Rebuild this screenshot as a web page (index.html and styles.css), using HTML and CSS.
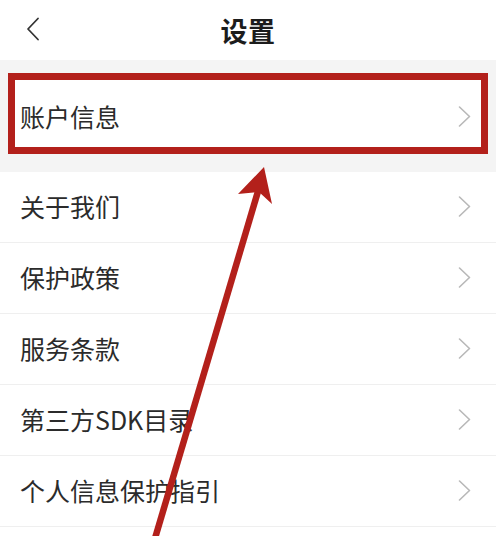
FILE: index.html
```html
<!DOCTYPE html>
<html lang="zh-CN">
<head>
<meta charset="utf-8">
<title>设置</title>
<link rel="stylesheet" href="styles.css">
</head>
<body>
<div class="page">
  <header class="topbar">
    <svg class="back" width="14" height="24" viewBox="0 0 14 24"><path d="M12 1.5 L2 12 L12 22.5" fill="none" stroke="#333" stroke-width="1.8" stroke-linecap="round" stroke-linejoin="round"/></svg>
    <h1 class="title">设置</h1>
  </header>
  <section class="band">
    <div class="row row-marked">
      <span class="label">账户信息</span>
      <svg class="chev" width="13" height="21" viewBox="0 0 13 21"><path d="M1.5 1 L11.5 10.5 L1.5 20" fill="none" stroke="#b8b8b8" stroke-width="1.6" stroke-linecap="round" stroke-linejoin="round"/></svg>
    </div>
  </section>
  <ul class="list">
    <li class="row"><span class="label">关于我们</span><svg class="chev" width="13" height="21" viewBox="0 0 13 21"><path d="M1.5 1 L11.5 10.5 L1.5 20" fill="none" stroke="#b8b8b8" stroke-width="1.6" stroke-linecap="round" stroke-linejoin="round"/></svg></li>
    <li class="row"><span class="label">保护政策</span><svg class="chev" width="13" height="21" viewBox="0 0 13 21"><path d="M1.5 1 L11.5 10.5 L1.5 20" fill="none" stroke="#b8b8b8" stroke-width="1.6" stroke-linecap="round" stroke-linejoin="round"/></svg></li>
    <li class="row"><span class="label">服务条款</span><svg class="chev" width="13" height="21" viewBox="0 0 13 21"><path d="M1.5 1 L11.5 10.5 L1.5 20" fill="none" stroke="#b8b8b8" stroke-width="1.6" stroke-linecap="round" stroke-linejoin="round"/></svg></li>
    <li class="row"><span class="label">第三方SDK目录</span><svg class="chev" width="13" height="21" viewBox="0 0 13 21"><path d="M1.5 1 L11.5 10.5 L1.5 20" fill="none" stroke="#b8b8b8" stroke-width="1.6" stroke-linecap="round" stroke-linejoin="round"/></svg></li>
    <li class="row"><span class="label">个人信息保护指引</span><svg class="chev" width="13" height="21" viewBox="0 0 13 21"><path d="M1.5 1 L11.5 10.5 L1.5 20" fill="none" stroke="#b8b8b8" stroke-width="1.6" stroke-linecap="round" stroke-linejoin="round"/></svg></li>
    <li class="row"><span class="label"></span></li>
  </ul>
  <svg class="arrow" width="496" height="536" viewBox="0 0 496 536">
    <line x1="259" y1="188" x2="153" y2="545" stroke="#b3201b" stroke-width="6.5"/>
    <path d="M264 167 L272 204 L259 192 L238 194 Z" fill="#b3201b"/>
  </svg>
</div>
</body>
</html>
```
FILE: styles.css
```css
* { box-sizing: border-box; }
html, body { margin: 0; padding: 0; background: #fff; }
body {
  font-family: "Noto Sans CJK SC", "Noto Sans", sans-serif;
  color: #2a2a2a;
  width: 496px;
  height: 536px;
  overflow: hidden;
}
.page { position: relative; width: 496px; height: 536px; overflow: hidden; }
.topbar {
  height: 60px;
  display: flex;
  align-items: center;
  justify-content: center;
  position: relative;
}
.back { position: absolute; left: 26px; top: 17px; }
.title {
  margin: 0;
  font-size: 27px;
  font-weight: 700;
  color: #1c1c1c;
  line-height: 1;
  letter-spacing: 0.5px;
  padding-top: 0;
}
.band {
  background: #f4f4f4;
  padding: 13px 8px 18px 8px;
}
.row {
  display: flex;
  align-items: center;
  justify-content: space-between;
  background: #fff;
}
.row-marked {
  height: 81px;
  border: 7px solid #b3201b;
  padding: 6px 10px 0 5px;
}
.label {
  font-size: 25px;
  line-height: 1;
  color: #2b2b2b;
}
.list { list-style: none; margin: 0; padding: 0; }
.list .row {
  height: 71px;
  padding: 0 25px 1px 20px;
  border-bottom: 1px solid #efefef;
}
.arrow { position: absolute; left: 0; top: 0; pointer-events: none; }
```
